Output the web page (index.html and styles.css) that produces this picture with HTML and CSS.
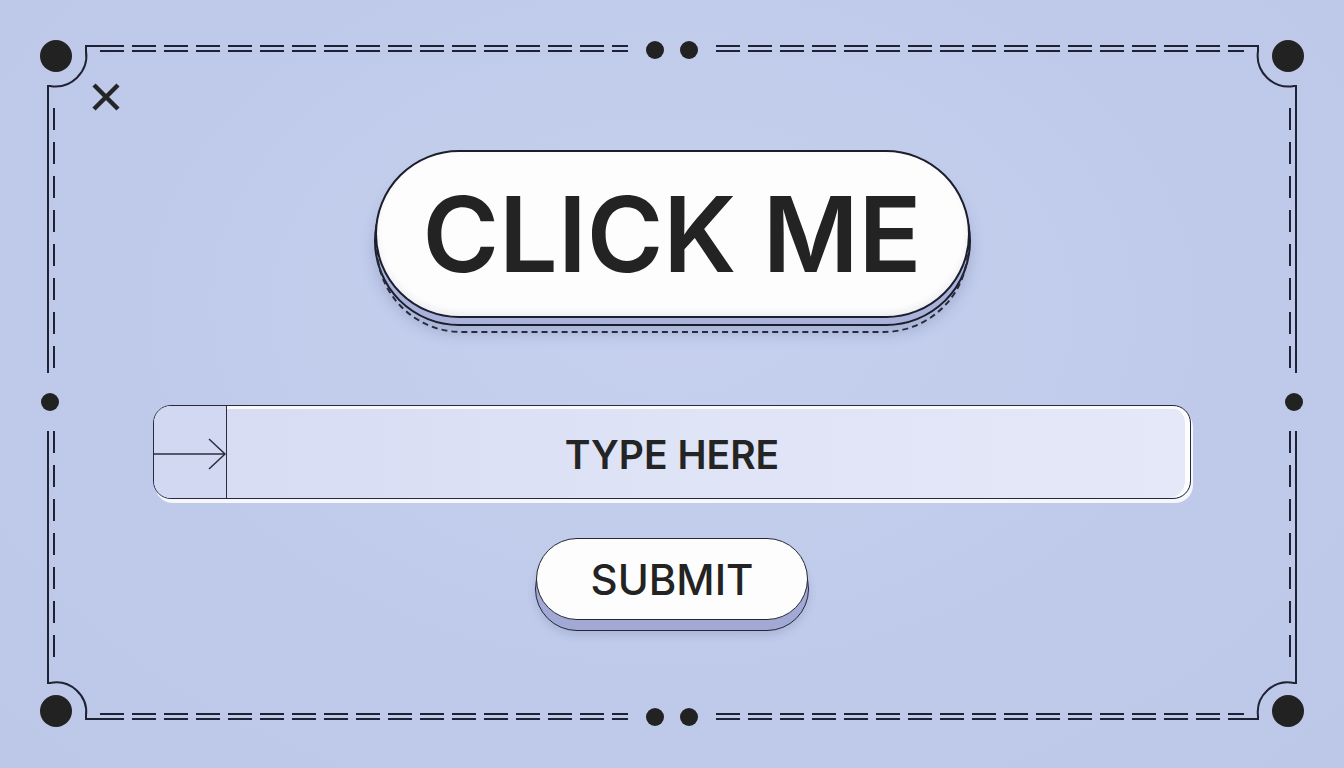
FILE: index.html
```html
<!DOCTYPE html>
<html>
<head>
	<meta charset="utf-8">
	<title>Click me</title>
	<link rel="stylesheet" href="styles.css">
</head>
<body>
	<div class="stage">
		<!-- frame: corner dots, arcs and double dashed rules -->
		<svg class="frame" width="1344" height="768" viewBox="0 0 1344 768">
			<g fill="none" stroke="#1e2233" stroke-width="2">
				<!-- corners -->
				<path d="M48 108 V86 H50 A31 31 0 0 0 86 51 V46 H100"/>
				<path d="M1296 108 V86 H1294 A31 31 0 0 1 1258 51 V46 H1244"/>
				<path d="M48 660 V683 H50 A30 30 0 0 1 86 716 V719 H100"/>
				<path d="M1296 660 V683 H1294 A30 30 0 0 0 1258 716 V719 H1244"/>
				<!-- top and bottom -->
				<g stroke-dasharray="24 8">
					<path d="M100 46 H628 M100 51 H628"/>
					<path d="M716 46 H1244 M716 51 H1244"/>
					<path d="M100 714 H628 M100 719 H628"/>
					<path d="M716 714 H1244 M716 719 H1244"/>
				</g>
				<!-- sides -->
				<path d="M48 108 V373 M48 431 V660"/>
				<path d="M1296 108 V373 M1296 431 V660"/>
				<g stroke-dasharray="22 12">
					<path d="M54 108 V373 M54 431 V660"/>
					<path d="M1290 108 V373 M1290 431 V660"/>
				</g>
			</g>
			<g fill="#222">
				<circle cx="56" cy="56" r="16"/>
				<circle cx="1288" cy="56" r="16"/>
				<circle cx="56" cy="711" r="16"/>
				<circle cx="1288" cy="711" r="16"/>
				<circle cx="655" cy="50" r="9"/>
				<circle cx="689" cy="50" r="9"/>
				<circle cx="655" cy="717" r="9"/>
				<circle cx="689" cy="717" r="9"/>
				<circle cx="50" cy="402" r="9"/>
				<circle cx="1294" cy="402" r="9"/>
			</g>
		</svg>

		<button class="close" type="button" aria-label="close">
			<svg width="30" height="30" viewBox="0 0 30 30"><path d="M3 3 L27 27 M27 3 L3 27" stroke="#252525" stroke-width="4.5"/></svg>
		</button>

		<div class="content">
			<button class="big-btn" type="button">CLICK ME</button>

			<div class="field">
				<div class="field-icon">
					<svg width="73" height="94" viewBox="0 0 73 94"><path d="M0 51 H71 M55 36 L71 51 L55 66" fill="none" stroke="#2a2e3f" stroke-width="1.5"/></svg>
				</div>
				<div class="field-text">TYPE HERE</div>
			</div>

			<button class="submit" type="button">SUBMIT</button>
		</div>
	</div>
</body>
</html>
```

FILE: styles.css
```css
*{margin:0;padding:0;box-sizing:border-box;}
body{
	background:#c0cbeb;
	font-family:Inter,"Liberation Sans",sans-serif;
	color:#222;
}
.stage{
	position:relative;
	width:1344px;
	height:768px;
	overflow:hidden;
	background:radial-gradient(ellipse at 50% 40%,#c6d0ee 0%,#bfcaea 60%,#bdc8e9 100%);
}
.frame{
	position:absolute;
	left:0;
	top:0;
	pointer-events:none;
}
.close{
	position:absolute;
	left:91px;
	top:82px;
	width:30px;
	height:30px;
	border:0;
	background:none;
}
.close svg{display:block;}

.content{
	position:relative;
	z-index:0;
	display:flex;
	flex-direction:column;
	align-items:center;
	padding-top:150px;
}

/* big pill with stacked layers under it */
.big-btn{
	position:relative;
	width:595px;
	height:168px;
	border-radius:84px;
	border:2.5px solid #1b1f2c;
	background:#fdfdfd;
	font-family:Inter,"Liberation Sans",sans-serif;
	font-size:104px;
	font-weight:600;
	color:#232323;
	margin-bottom:87px;
	box-shadow:inset 0 -4px 6px rgba(120,130,170,.12);
}
.big-btn::before,
.big-btn::after{
	content:"";
	position:absolute;
	border-radius:86px;
	z-index:-1;
}
.big-btn::before{
	left:-3px;
	right:-3px;
	top:4px;
	bottom:-10px;
	background:#aab2dc;
	border:2px solid #1b1f2c;
	box-shadow:0 8px 14px rgba(80,90,140,.25);
}
.big-btn::after{
	left:-1px;
	right:-1px;
	top:10px;
	bottom:-17px;
	border:2px dashed #262a3a;
}

/* text field */
.field{
	display:flex;
	width:1038px;
	height:94px;
	border:1.5px solid #262a3a;
	border-radius:18px;
	background:linear-gradient(90deg,#d6dbf3 0%,#dfe3f6 50%,#e5e8f8 100%);
	box-shadow:inset 0 3px 0 rgba(255,255,255,.85),inset -5px 0 0 rgba(255,255,255,.9),2px 4px 0 rgba(255,255,255,.85);
	margin-bottom:39px;
	overflow:hidden;
}
.field-icon{
	width:73px;
	border-right:1.5px solid #2a2e3f;
	background:#d2d8f1;
}
.field-icon svg{display:block;margin-top:-3px;}
.field-text{
	flex:1;
	display:flex;
	align-items:center;
	justify-content:center;
	padding:4px 73px 0 0;
	font-size:39px;
	font-weight:600;
	color:#242424;
}

/* submit */
.submit{
	position:relative;
	width:272px;
	height:82px;
	border-radius:41px;
	border:1.5px solid #232736;
	background:#fdfdfd;
	font-family:Inter,"Liberation Sans",sans-serif;
	font-size:42px;
	font-weight:500;
	color:#232323;
}
.submit::before{
	content:"";
	position:absolute;
	left:-2px;
	right:-2px;
	top:8px;
	bottom:-12px;
	border-radius:44px;
	background:#a2a9d4;
	border:1.5px solid #232736;
	z-index:-1;
	box-shadow:0 4px 8px rgba(80,90,140,.2);
}
```
